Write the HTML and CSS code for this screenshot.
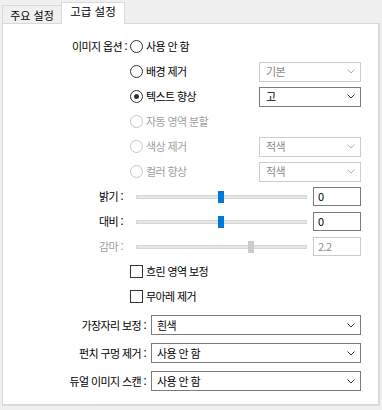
FILE: index.html
```html
<!DOCTYPE html>
<html lang="ko">
<head>
<meta charset="utf-8">
<link rel="stylesheet" href="styles.css">
</head>
<body>
<div class="tabs">
  <div class="tab">주요 설정</div>
  <div class="tab active">고급 설정</div>
</div>
<div class="panel">
  <div class="row">
    <span class="lbl lbl-opt">이미지 옵션 :</span>
    <span class="radio"><span class="rb"></span>사용 안 함</span>
  </div>
  <div class="row">
    <span class="lbl lbl-opt"></span>
    <span class="radio"><span class="rb"></span>배경 제거</span>
    <div class="select disabled"><span>기본</span><svg class="chev" width="8" height="5" viewBox="0 0 8 5"><path d="M0.5 0.5 L4 4 L7.5 0.5" fill="none"/></svg></div>
  </div>
  <div class="row">
    <span class="lbl lbl-opt"></span>
    <span class="radio"><span class="rb checked"></span>텍스트 향상</span>
    <div class="select"><span>고</span><svg class="chev" width="8" height="5" viewBox="0 0 8 5"><path d="M0.5 0.5 L4 4 L7.5 0.5" fill="none"/></svg></div>
  </div>
  <div class="row">
    <span class="lbl lbl-opt"></span>
    <span class="radio dis"><span class="rb"></span>자동 영역 분할</span>
  </div>
  <div class="row">
    <span class="lbl lbl-opt"></span>
    <span class="radio dis"><span class="rb"></span>색상 제거</span>
    <div class="select disabled"><span>적색</span><svg class="chev" width="8" height="5" viewBox="0 0 8 5"><path d="M0.5 0.5 L4 4 L7.5 0.5" fill="none"/></svg></div>
  </div>
  <div class="row">
    <span class="lbl lbl-opt"></span>
    <span class="radio dis"><span class="rb"></span>컬러 향상</span>
    <div class="select disabled"><span>적색</span><svg class="chev" width="8" height="5" viewBox="0 0 8 5"><path d="M0.5 0.5 L4 4 L7.5 0.5" fill="none"/></svg></div>
  </div>
  <div class="row">
    <span class="lbl lbl-sl">밝기 :</span>
    <div class="slider"><div class="track"></div><div class="thumb" style="left:82px"></div></div>
    <div class="input">0</div>
  </div>
  <div class="row">
    <span class="lbl lbl-sl">대비 :</span>
    <div class="slider"><div class="track"></div><div class="thumb" style="left:82px"></div></div>
    <div class="input">0</div>
  </div>
  <div class="row">
    <span class="lbl lbl-sl dis">감마 :</span>
    <div class="slider disabled"><div class="track"></div><div class="thumb" style="left:112px"></div></div>
    <div class="input disabled">2.2</div>
  </div>
  <div class="row check-row">
    <span class="cb"></span>흐린 영역 보정
  </div>
  <div class="row check-row">
    <span class="cb"></span>무아레 제거
  </div>
  <div class="bottom">
    <div class="row brow">
      <span class="lbl lbl-b">가장자리 보정 :</span>
      <div class="select wide"><span>흰색</span><svg class="chev" width="8" height="5" viewBox="0 0 8 5"><path d="M0.5 0.5 L4 4 L7.5 0.5" fill="none"/></svg></div>
    </div>
    <div class="row brow">
      <span class="lbl lbl-b">펀치 구멍 제거 :</span>
      <div class="select wide"><span>사용 안 함</span><svg class="chev" width="8" height="5" viewBox="0 0 8 5"><path d="M0.5 0.5 L4 4 L7.5 0.5" fill="none"/></svg></div>
    </div>
    <div class="row brow">
      <span class="lbl lbl-b">듀얼 이미지 스캔 :</span>
      <div class="select wide"><span>사용 안 함</span><svg class="chev" width="8" height="5" viewBox="0 0 8 5"><path d="M0.5 0.5 L4 4 L7.5 0.5" fill="none"/></svg></div>
    </div>
  </div>
</div>
</body>
</html>
```
FILE: styles.css
```css
* { box-sizing: border-box; }
html, body {
  margin: 0;
  padding: 0;
  background: #f0f0f0;
}
body {
  font-family: "Noto Sans CJK KR", "Noto Sans", sans-serif;
  font-size: 11px;
  letter-spacing: -0.6px;
  color: #000;
  width: 382px;
  height: 410px;
  overflow: hidden;
}
.tabs {
  display: flex;
  align-items: flex-end;
  height: 23px;
  padding-left: 2px;
  position: relative;
  z-index: 2;
}
.tab {
  height: 18px;
  width: 60px;
  border: 1px solid #d9d9d9;
  border-bottom: none;
  background: #f0f0f0;
  display: flex;
  align-items: center;
  justify-content: center;
  line-height: 1;
  padding-top: 1px;
  letter-spacing: 0;
}
.tab.active {
  height: 22px;
  width: 64px;
  margin-left: -1px;
  margin-bottom: -1px;
  background: #fff;
  padding-top: 0;
  padding-bottom: 3px;
  font-size: 11.5px;
}
.panel {
  margin-left: 2px;
  width: 378px;
  height: 383px;
  background: #fff;
  border: 1px solid #d9d9d9;
  border-right: 2px solid #dadada;
  border-bottom: 2px solid #dadada;
  padding-top: 10px;
}
.row {
  height: 25px;
  display: flex;
  align-items: center;
  line-height: 1;
}
.lbl {
  text-align: right;
  white-space: nowrap;
  flex: none;
}
.lbl-opt { width: 124px; }
.lbl-sl { width: 120px; }
.lbl-b { width: 143px; }
.dis { color: #a0a0a0; }
.radio {
  display: flex;
  align-items: center;
  margin-left: 3px;
  width: 129px;
  flex: none;
}
.rb {
  width: 13px;
  height: 13px;
  border: 1px solid #333;
  border-radius: 50%;
  margin-right: 3px;
  display: flex;
  align-items: center;
  justify-content: center;
  flex: none;
}
.rb.checked::after {
  content: "";
  width: 5px;
  height: 5px;
  border-radius: 50%;
  background: #333;
}
.radio.dis .rb { border-color: #c6c6c6; }
.select {
  width: 102px;
  height: 20px;
  border: 1px solid #7a7a7a;
  display: flex;
  align-items: center;
  padding-left: 6px;
  padding-right: 5px;
  flex: none;
}
.select span { flex: 1; }
.chev path { stroke: #333; stroke-width: 1; }
.select.disabled { border-color: #cccccc; color: #8a8a8a; }
.select.disabled .chev path { stroke: #b0b0b0; }
.select.wide {
  width: 210px;
  margin-left: 5px;
  padding-left: 5px;
}
.slider {
  position: relative;
  width: 171px;
  height: 14px;
  margin-left: 13px;
  flex: none;
  display: flex;
  align-items: center;
}
.track {
  width: 100%;
  height: 4px;
  background: #e7e7e7;
  border: 1px solid #d6d6d6;
}
.thumb {
  position: absolute;
  top: 1px;
  width: 6px;
  height: 12px;
  background: #0078d7;
}
.slider.disabled .thumb { background: #cccccc; }
.input {
  width: 48px;
  height: 19px;
  margin-left: 6px;
  border: 1px solid #7a7a7a;
  padding-left: 4px;
  display: flex;
  align-items: center;
  flex: none;
}
.input.disabled { border-color: #cccccc; color: #8a8a8a; }
.check-row { padding-left: 127px; }
.cb {
  width: 13px;
  height: 13px;
  border: 1px solid #333;
  margin-right: 3px;
  flex: none;
}
.bottom { margin-top: 2px; }
.brow { height: 28px; }
```
